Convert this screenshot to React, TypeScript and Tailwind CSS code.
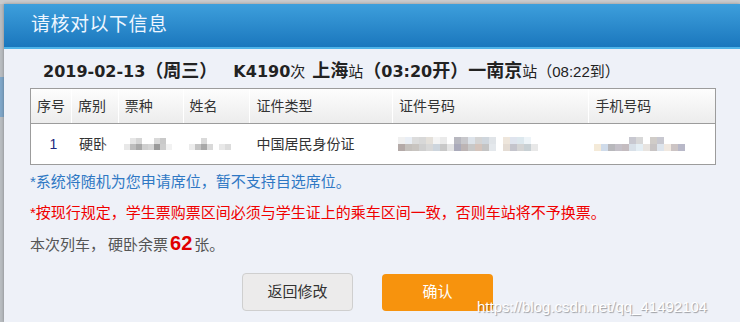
import React from "react";

const cjk = '"Liberation Sans", "Noto Sans CJK SC", sans-serif';
const latinBold = '"DejaVu Sans", "Noto Sans CJK SC", sans-serif';

const Pixels: React.FC<{ rows: string[][]; size?: number }> = ({ rows, size = 7 }) => (
  <div className="flex flex-col">
    {rows.map((row, i) => (
      <div key={i} className="flex">
        {row.map((c, j) => (
          <span key={j} style={{ width: size, height: size, background: c }} />
        ))}
      </div>
    ))}
  </div>
);

const T = "transparent";

const ticketBlur = [
  [T, "#e6e6e6", "#d6d6d6", T, T, "#d9d9d9", "#c9c9c9", T],
  ["#e8e8e8", "#bdbdbd", "#a8a8a8", "#cfcfcf", "#d5d5d5", "#9a9a9a", "#cdcdcd", "#f2f2f2"],
];
const nameBlur = [
  [T, T, "#dadada", T, T, T, T, T],
  ["#ececec", "#c4c4c4", "#a8a8a8", "#d9d9d9", T, "#e8e8e8", "#dcdcdc", T],
];
const idBlur = [
  ["#f0f0f0", "#e9eef5", "#dcdcdc", "#d8d8d8", "#e4e0da", "#f4f4f4", "#eaeaea", T, "#b8b8c0", "#c8c8cc", "#dde3ea", "#d4d4d4", "#cfd6dd", "#e0e4e8", T, "#eee6dc", "#dfe4ee", "#dde8ee", "#eef4f8", T],
  ["#b4aaa8", "#c4c0bc", "#c8c4c0", "#cfcfcf", "#d8d8d8", "#cdd5dd", "#c8c8c8", "#e4e4e4", "#aaaaba", "#bcb4b4", "#c8c8c8", "#d4c4bc", "#c4c4c4", "#e4e8ec", T, "#e4dcd4", "#c4c4cc", "#d4d4d4", "#c8d0d4", "#e8e8e8"],
];
const phoneBlur = [
  [T, T, T, T, T, "#c8c8d0", "#d8d8d8", T, "#d0ccc8", "#c8c8d0", T, T, T],
  ["#f4ead8", "#cfdbea", "#b8b8bc", "#c4c0c8", "#c4bcc0", "#d8e0e8", "#e4eef4", "#e8e4e0", "#c8c4c4", "#dde4ec", "#f0e8e0", "#ccc4c4", "#b8b8c8"],
];

const cols = [
  { w: 41, label: "序号" },
  { w: 47, label: "席别" },
  { w: 65, label: "票种" },
  { w: 67, label: "姓名" },
  { w: 143, label: "证件类型" },
  { w: 197, label: "证件号码" },
  { w: 126, label: "手机号码" },
];

export default function App() {
  return (
    <div className="relative w-[740px] h-[322px] overflow-hidden bg-[#d4d6d8] flex flex-col" style={{ fontFamily: cjk }}>
      <div className="h-[4px] bg-[#c9cacc]" />
      <div className="flex flex-1">
        <div className="w-[4px] bg-[#b8bcc0] flex flex-col">
          <div className="h-[73px]" />
          <div className="h-[40px] bg-[#7fa6c8]" />
        </div>
        <div className="flex-1 flex flex-col bg-[#eef1f8] shadow-[0_0_3px_rgba(0,0,0,0.3)]">
          <div className="h-[43px] bg-gradient-to-b from-[#3d9fdc] to-[#1a77bd] flex items-center pl-[27px]">
            <span className="text-[19px] text-[#eef6ff] tracking-[0.5px]">请核对以下信息</span>
          </div>
          <div className="h-[2px] bg-[#4fb4e8]" />

          <div className="flex items-baseline pl-[39px] pt-[9px] h-[39px] text-[#222] whitespace-nowrap">
            <span className="text-[16px] font-bold" style={{ fontFamily: latinBold }}>2019-02-13</span>
            <span className="text-[18px] font-bold">（周三）</span>
            <span className="text-[16px] font-bold ml-[16px]" style={{ fontFamily: latinBold }}>K4190</span>
            <span className="text-[15px]">次</span>
            <span className="text-[18px] font-bold ml-[7px]">上海</span>
            <span className="text-[15px]">站</span>
            <span className="text-[18px] font-bold">（</span>
            <span className="text-[16px] font-bold" style={{ fontFamily: latinBold }}>03:20</span>
            <span className="text-[18px] font-bold">开）一南京</span>
            <span className="text-[15px]">站（08:22到）</span>
          </div>

          <div className="ml-[26px] w-[686px] border border-[#9c9c9c] bg-white text-[14px] text-[#333]">
            <div className="flex h-[35px] bg-gradient-to-b from-[#fdfdfd] to-[#ececec] border-b border-[#9c9c9c]">
              {cols.map((c, i) => (
                <div
                  key={c.label}
                  className={`flex items-center pl-[6px] ${i < cols.length - 1 ? "border-r border-white" : ""}`}
                  style={{ width: c.w }}
                >
                  {c.label}
                </div>
              ))}
            </div>
            <div className="flex h-[40px] items-center">
              <div className="w-[41px] text-center pl-[4px] text-[#1d2a80]">1</div>
              <div className="w-[47px] pl-[7px]">硬卧</div>
              <div className="w-[65px] pl-[5px]"><Pixels rows={ticketBlur} size={6} /></div>
              <div className="w-[67px] pl-[5px]"><Pixels rows={nameBlur} size={6} /></div>
              <div className="w-[143px] pl-[6px]">中国居民身份证</div>
              <div className="w-[197px] pl-[5px]"><Pixels rows={idBlur} size={7} /></div>
              <div className="w-[126px] pl-[5px]"><Pixels rows={phoneBlur} size={7} /></div>
            </div>
          </div>

          <div className="pl-[26px] pt-[8px] text-[15px] leading-[18px]">
            <div className="text-[#2f78c4]">*系统将随机为您申请席位，暂不支持自选席位。</div>
            <div className="text-[#f00000] mt-[13px]">*按现行规定，学生票购票区间必须与学生证上的乘车区间一致，否则车站将不予换票。</div>
            <div className="text-[#555] mt-[12px] flex items-baseline">
              <span>本次列车，</span>
              <span className="ml-[3px]">硬卧余票</span>
              <span className="text-[20px] font-bold text-[#e00000] mx-[2px]">62</span>
              <span>张。</span>
            </div>
          </div>

          <div className="flex justify-start pl-[238px] gap-[29px] mt-[19px]">
            <button className="w-[111px] h-[38px] rounded-[4px] border border-[#cfcfcf] bg-[#ecebeb] text-[15px] text-[#333]">
              返回修改
            </button>
            <button className="w-[111px] h-[37px] mt-[1px] rounded-[4px] bg-[#f7930d] text-[15px] text-white">
              确认
            </button>
          </div>
        </div>
      </div>
      <div
        className="absolute left-[477px] top-[296px] text-[15px] text-white whitespace-nowrap"
        style={{ fontFamily: '"Liberation Sans", Arial, sans-serif', textShadow: "1px 1px 1px rgba(0,0,0,0.35)" }}
      >
        https://blog.csdn.net/qq_41492104
      </div>
    </div>
  );
}
